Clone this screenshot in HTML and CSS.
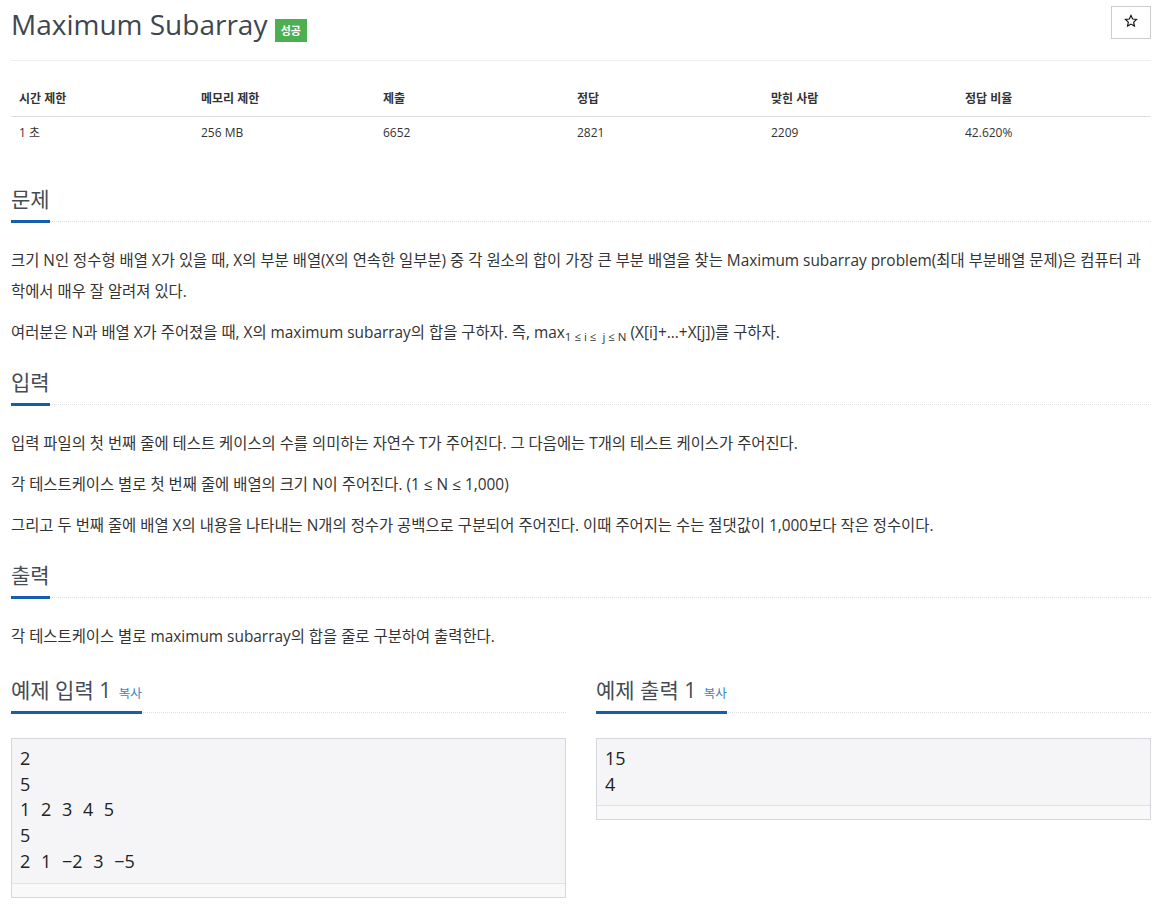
FILE: index.html
```html
<!DOCTYPE html>
<html lang="ko">
<head>
<meta charset="utf-8">
<title>Maximum Subarray</title>
<link rel="stylesheet" href="styles.css">
</head>
<body>
<div class="page">
  <header class="page-header">
    <h1 class="title">Maximum Subarray <span class="badge">성공</span></h1>
    <button class="star" type="button" aria-label="즐겨찾기">
      <svg class="star-icon" width="14" height="14" viewBox="0 0 24 24" aria-hidden="true">
        <path d="M12 2.5l2.9 6.1 6.6.8-4.9 4.6 1.3 6.6L12 17.3l-5.9 3.3 1.3-6.6-4.9-4.6 6.6-.8z" fill="none" stroke="#111" stroke-width="2" stroke-linejoin="miter"/>
      </svg>
    </button>
  </header>

  <table class="stats">
    <colgroup>
      <col class="c-narrow"><col class="c-narrow"><col class="c-wide"><col class="c-wide"><col class="c-wide"><col class="c-wide">
    </colgroup>
    <thead>
      <tr><th>시간 제한</th><th>메모리 제한</th><th>제출</th><th>정답</th><th>맞힌 사람</th><th>정답 비율</th></tr>
    </thead>
    <tbody>
      <tr><td>1 초</td><td>256 MB</td><td>6652</td><td>2821</td><td>2209</td><td>42.620%</td></tr>
    </tbody>
  </table>

  <section class="section section-first">
    <div class="headline"><h2>문제</h2></div>
    <div class="problem-text">
      <p>크기 N인 정수형 배열 X가 있을 때, X의 부분 배열(X의 연속한 일부분) 중 각 원소의 합이 가장 큰 부분 배열을 찾는 Maximum subarray problem(최대 부분배열 문제)은 컴퓨터 과학에서 매우 잘 알려져 있다.</p>
      <p>여러분은 N과 배열 X가 주어졌을 때, X의 maximum subarray의 합을 구하자. 즉, max<sub class="sub">1 ≤ i ≤&nbsp; j ≤ N</sub> (X[i]+...+X[j])를 구하자.</p>
    </div>
  </section>

  <section class="section">
    <div class="headline"><h2>입력</h2></div>
    <div class="problem-text">
      <p>입력 파일의 첫 번째 줄에 테스트 케이스의 수를 의미하는 자연수 T가 주어진다. 그 다음에는 T개의 테스트 케이스가 주어진다.</p>
      <p>각 테스트케이스 별로 첫 번째 줄에 배열의 크기 N이 주어진다. (1 ≤ N ≤ 1,000)</p>
      <p>그리고 두 번째 줄에 배열 X의 내용을 나타내는 N개의 정수가 공백으로 구분되어 주어진다. 이때 주어지는 수는 절댓값이 1,000보다 작은 정수이다.</p>
    </div>
  </section>

  <section class="section">
    <div class="headline"><h2>출력</h2></div>
    <div class="problem-text">
      <p>각 테스트케이스 별로 maximum subarray의 합을 줄로 구분하여 출력한다.</p>
    </div>
  </section>

  <div class="samples">
    <section class="sample">
      <div class="headline"><h2>예제 입력 1 <a class="copy" href="#">복사</a></h2></div>
      <div class="sample-box">
        <pre class="sample-data">2
5
1 2 3 4 5
5
2 1 −2 3 −5</pre>
        <div class="sample-scroll"></div>
      </div>
    </section>
    <section class="sample">
      <div class="headline"><h2>예제 출력 1 <a class="copy" href="#">복사</a></h2></div>
      <div class="sample-box">
        <pre class="sample-data">15
4</pre>
        <div class="sample-scroll"></div>
      </div>
    </section>
  </div>
</div>
</body>
</html>
```

FILE: styles.css
```css
* { box-sizing: border-box; }

html, body {
  margin: 0;
  padding: 0;
  background: #fff;
}

body {
  font-family: "Open Sans", "Noto Sans CJK KR", sans-serif;
  color: #333;
  font-size: 15px;
}

.page {
  width: 1162px;
  padding: 0 11px;
}

/* header */
.page-header {
  display: flex;
  justify-content: space-between;
  align-items: flex-start;
  height: 61px;
  padding-top: 4px;
  border-bottom: 1px solid #eee;
}

.title {
  margin: 0;
  font-size: 28px;
  line-height: 40px;
  font-weight: 400;
  color: #40464f;
}

.badge {
  display: inline-block;
  background: #4caf50;
  color: #fff;
  font-size: 11px;
  font-weight: 700;
  line-height: 17px;
  padding: 3px 6px;
}

.star {
  margin-top: 2px;
  width: 40px;
  height: 33px;
  border: 1px solid #ccc;
  background: #fff;
  padding: 0;
  display: flex;
  align-items: center;
  justify-content: center;
}

.star-icon {
  display: block;
  margin-top: -3px;
}

/* stats table */
.stats {
  width: 1140px;
  table-layout: fixed;
  border-collapse: collapse;
  margin-top: 19px;
  font-size: 12px;
  color: #333;
}

.c-narrow { width: 182px; }
.c-wide { width: 194px; }

.stats th {
  text-align: left;
  font-weight: 700;
  padding: 9px 8px 7px;
  line-height: 20px;
  border-bottom: 1px solid #ddd;
}

.stats td {
  padding: 6px 8px 8px;
  line-height: 20px;
}

/* sections */
.section {
  margin-top: 21px;
}

.section-first {
  margin-top: 35px;
}

.headline {
  border-bottom: 1px dotted #dcdfe4;
}

.headline h2 {
  display: inline-block;
  margin: 0 0 -2px;
  padding-bottom: 8px;
  border-bottom: 3px solid #145eac;
  font-size: 21px;
  line-height: 26px;
  font-weight: 400;
  color: #454c55;
}

.problem-text {
  padding-top: 23px;
}

.problem-text p {
  margin: 0 0 10px;
  line-height: 31px;
  font-size: 15.4px;
  color: #333;
}

.problem-text p:last-child {
  margin-bottom: 0;
}

.sub {
  font-size: 11.5px;
  line-height: 0;
  vertical-align: -3px;
}

/* samples */
.samples {
  display: grid;
  grid-template-columns: 555px 555px;
  column-gap: 30px;
  margin-top: 25px;
}

.copy {
  font-size: 12.5px;
  line-height: 1;
  color: #3b7fc4;
  text-decoration: none;
  margin-left: 2px;
}

.sample-box {
  margin-top: 25px;
  border: 1px solid #d6d6dd;
  background: #f5f5f7;
}

.sample-data {
  margin: 0;
  padding: 7px 8px 8px;
  font-family: "Open Sans", sans-serif;
  font-size: 18px;
  line-height: 25.7px;
  word-spacing: 6px;
  color: #222;
}

.sample-scroll {
  height: 14px;
  border-top: 1px solid #e2e2e8;
  background: #f9f9fa;
}
```
